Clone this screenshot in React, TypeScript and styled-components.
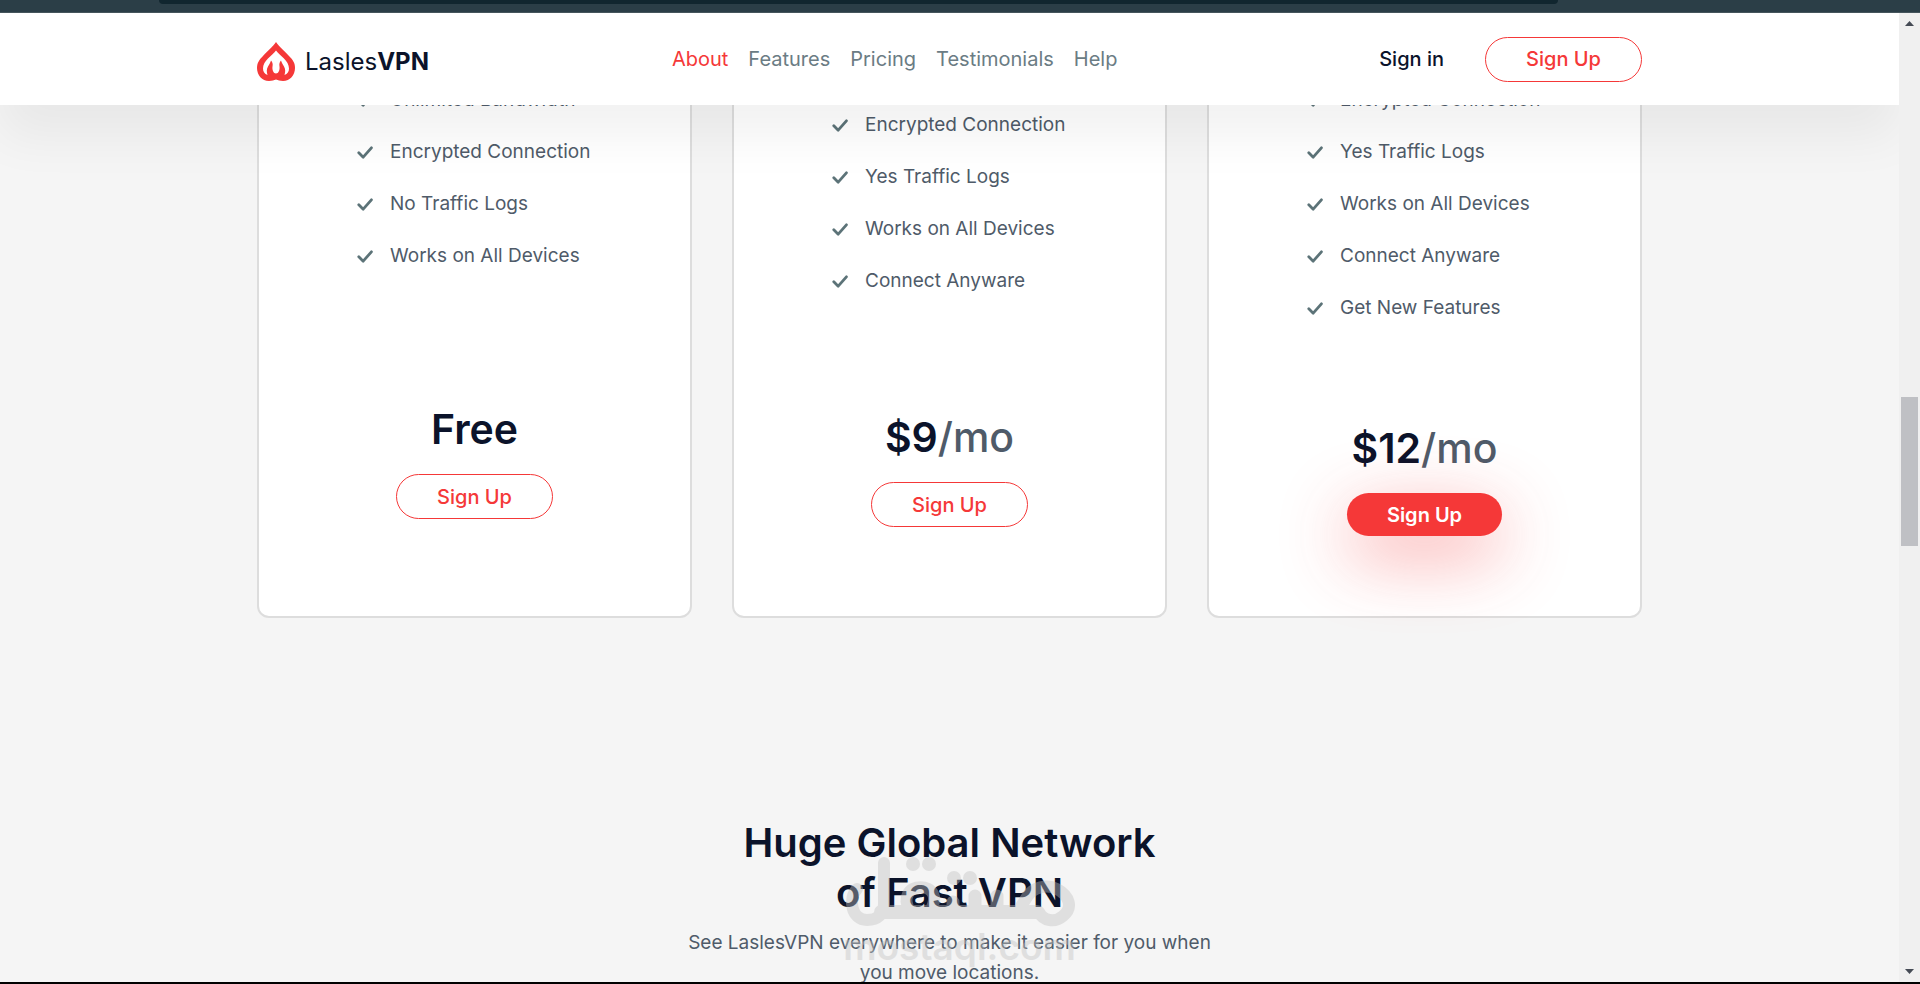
import React from "react";
import styled, { createGlobalStyle, css } from "styled-components";

const navy = "#0b132a";
const slate = "#4f5b69";
const red = "#f53838";

const GlobalStyle = createGlobalStyle`
  *, *::before, *::after { box-sizing: border-box; }
  body {
    margin: 0;
    background: #f5f5f5;
    color: ${slate};
    font-family: Inter, "Liberation Sans", sans-serif;
  }
`;

const Window = styled.div`
  display: flex;
  flex-direction: column;
  height: 100vh;
  overflow: hidden;
  border-bottom: 2px solid #000;
`;

const BrowserStrip = styled.div`
  flex: none;
  height: 13px;
  padding: 0 362px 0 159px;
  background: #2b3e47;
  border-bottom: 1px solid #45555c;
`;

const AddressBar = styled.div`
  height: 4px;
  border-radius: 0 0 8px 8px;
  background: #11262f;
`;

const Viewport = styled.div`
  flex: 1;
  min-height: 0;
  display: flex;
`;

const Page = styled.div`
  flex: 1;
  min-width: 0;
  overflow: hidden;
`;

const Container = styled.div`
  width: 100%;
  max-width: 1385px;
  margin: 0 auto;
`;

const Header = styled.header`
  position: relative;
  z-index: 2;
  background: #fff;
  box-shadow: 0 32px 50px rgba(14, 14, 14, 0.055);
`;

const HeaderRow = styled(Container)`
  display: flex;
  align-items: center;
  height: 92px;
`;

const Brand = styled.a`
  display: flex;
  align-items: center;
  gap: 10px;
  padding-top: 4px;
  color: ${navy};
  font-size: 24px;
  font-weight: 400;
  line-height: 30px;
  text-decoration: none;

  span { padding-top: 2px; }
  b { font-weight: 700; }
`;

const Nav = styled.nav`
  display: flex;
  gap: 20px;
  margin: 0 auto 0 243px;
`;

const NavLink = styled.a<{ $active?: boolean }>`
  color: ${(p) => (p.$active ? red : "#6b7c84")};
  font-size: 20px;
  line-height: 30px;
  text-decoration: none;
`;

const Account = styled.div`
  display: flex;
  align-items: center;
  gap: 41px;
`;

const SignIn = styled.a`
  color: ${navy};
  font-size: 20px;
  font-weight: 500;
  line-height: 30px;
  text-decoration: none;
`;

const PillButton = styled.button<{ $filled?: boolean }>`
  width: 157px;
  height: 45px;
  padding: 0;
  border: 1px solid ${red};
  border-radius: 24px;
  background: transparent;
  color: ${red};
  font: 500 20px/30px Inter, "Liberation Sans", sans-serif;
  cursor: pointer;

  ${(p) =>
    p.$filled &&
    css`
      width: 155px;
      height: 43px;
      border: 0;
      background: ${red};
      color: #fff;
      font-weight: 600;
      box-shadow: 0 20px 70px rgba(245, 56, 56, 0.45);
    `}
`;

const Plans = styled(Container)`
  display: grid;
  grid-template-columns: repeat(3, 1fr);
  gap: 40px;
  margin-top: -92px;
`;

const Card = styled.article<{ $top: number; $bottom: number }>`
  display: flex;
  flex-direction: column;
  align-items: center;
  padding: ${(p) => p.$top}px 0 ${(p) => p.$bottom}px;
  border: 2px solid #dddddd;
  border-radius: 12px;
  background: #fff;
`;

const FeatureList = styled.ul`
  align-self: stretch;
  margin: 0 0 89px;
  padding: 0 0 0 98px;
  list-style: none;
`;

const Feature = styled.li`
  display: flex;
  align-items: center;
  gap: 17px;
  height: 52px;
  font-size: 19px;
  line-height: 30px;
  white-space: nowrap;
`;

const Price = styled.h3`
  margin: auto 0 20px;
  color: ${navy};
  font-size: 41px;
  font-weight: 600;
  line-height: 50px;

  span { color: ${slate}; font-weight: 500; }
`;

const Network = styled.section`
  position: relative;
  margin-top: 200px;
  text-align: center;
`;

const NetworkTitle = styled.h2`
  margin: 0 0 10px;
  color: ${navy};
  font-size: 40px;
  font-weight: 600;
  line-height: 50px;
`;

const NetworkText = styled.p`
  max-width: 560px;
  margin: 0 auto;
  font-size: 19px;
  line-height: 30px;
`;

const Watermark = styled.div`
  position: absolute;
  top: 38px;
  left: 0;
  right: 0;
  display: flex;
  flex-direction: column;
  align-items: center;
  padding-left: 20px;
  color: #c2c2c2;
  font-size: 37px;
  font-weight: 600;
  line-height: 40px;
  opacity: 0.41;
  pointer-events: none;
`;

const ScrollRail = styled.div`
  flex: none;
  display: grid;
  grid-template-rows: 21px 363fr 149fr 415fr 21px;
  justify-items: center;
  align-items: center;
  width: 21px;
  background: #f0f0f0;
`;

const ScrollThumb = styled.div`
  grid-row: 3;
  align-self: stretch;
  width: 17px;
  background: #bfc0c4;
`;

const ScrollArrow = styled.svg<{ $row: number }>`
  grid-row: ${(p) => p.$row};
`;

const Logo = () => (
  <svg width="38" height="39" viewBox="0 0 38 39" aria-hidden="true">
    <path
      fill={red}
      d="M19 0C22 5 28 9 32 14C36 18 38 21 38 26C38 33 33 39 26 39C23 39 21 38.4 19 37.6C17 38.4 15 39 12 39C5 39 0 33 0 26C0 21 2 18 6 14C10 9 16 5 19 0Z"
    />
    <path
      fill="#fff"
      d="M19 8.500C23 14 32 18.500 32 26.500C32 29.500 30.500 32 27.500 33C28.500 29.500 28.500 27.500 27 24.500C25.500 22 24.500 20 24 18.500C22.500 20 22 22 22.500 24.500C23 28 21.500 31.500 19 31.500C16.500 31.500 15 28 15.500 24.500C16 22 15.500 20 14 18.500C13.500 20 12.500 22 11 24.500C9.500 27.500 9.500 29.500 10.500 33C7.500 32 6 29.500 6 26.500C6 18.500 15 14 19 8.500Z"
    />
  </svg>
);

const Check = () => (
  <svg width="16" height="14" viewBox="0 0 16 14" fill="none" aria-hidden="true">
    <path d="M1.800 7.800L6.200 12.200L14.400 2.800" stroke="#5c7378" strokeWidth="2.800" strokeLinecap="round" strokeLinejoin="round" />
  </svg>
);

const WatermarkMark = () => (
  <svg width="230" height="71" viewBox="0 0 230 71" fill="none" stroke="currentColor" strokeWidth="12" strokeLinecap="round" aria-hidden="true">
    <path d="M12 33C3 42 6 64 22 64C33 64 39 58 39 48V7" />
    <path d="M36 56H192" strokeWidth="14" />
    <path d="M64 54C62 48 60 44 63 38C67 29 84 29 88 38C91 44 88 48 86 54" />
    <path d="M108 54V46M130 54V40M152 54V40" strokeWidth="13" />
    <path d="M173 55L182 41C188 31 202 28 212 33C225 40 228 52 218 60C210 67 198 65 194 56" />
    <g fill="currentColor" stroke="none">
      <circle cx="68" cy="8" r="7" />
      <circle cx="84" cy="8" r="7" />
      <circle cx="109" cy="22" r="7" />
      <circle cx="125" cy="22" r="7" />
    </g>
  </svg>
);

const navItems = ["About", "Features", "Pricing", "Testimonials", "Help"];

const plans = [
  {
    price: "Free",
    top: 59,
    bottom: 97,
    features: ["Unlimited Bandwidth", "Encrypted Connection", "No Traffic Logs", "Works on All Devices"],
  },
  {
    price: "$9",
    period: "/mo",
    top: 84,
    bottom: 89,
    features: ["Encrypted Connection", "Yes Traffic Logs", "Works on All Devices", "Connect Anyware"],
  },
  {
    price: "$12",
    period: "/mo",
    top: 59,
    bottom: 80,
    filled: true,
    features: [
      "Encrypted Connection",
      "Yes Traffic Logs",
      "Works on All Devices",
      "Connect Anyware",
      "Get New Features",
    ],
  },
];

export default function App() {
  return (
    <Window>
      <GlobalStyle />
      <BrowserStrip>
        <AddressBar />
      </BrowserStrip>
      <Viewport>
        <Page>
          <Header>
            <HeaderRow>
              <Brand href="#">
                <Logo />
                <span>
                  Lasles<b>VPN</b>
                </span>
              </Brand>
              <Nav>
                {navItems.map((item, i) => (
                  <NavLink key={item} href="#" $active={i === 0}>
                    {item}
                  </NavLink>
                ))}
              </Nav>
              <Account>
                <SignIn href="#">Sign in</SignIn>
                <PillButton>Sign Up</PillButton>
              </Account>
            </HeaderRow>
          </Header>
          <Plans>
            {plans.map((plan) => (
              <Card key={plan.price} $top={plan.top} $bottom={plan.bottom}>
                <FeatureList>
                  {plan.features.map((feature) => (
                    <Feature key={feature}>
                      <Check />
                      {feature}
                    </Feature>
                  ))}
                </FeatureList>
                <Price>
                  {plan.price}
                  {plan.period && <span>{plan.period}</span>}
                </Price>
                <PillButton $filled={plan.filled}>Sign Up</PillButton>
              </Card>
            ))}
          </Plans>
          <Network>
            <NetworkTitle>
              Huge Global Network
              <br />
              of Fast VPN
            </NetworkTitle>
            <NetworkText>See LaslesVPN everywhere to make it easier for you when you move locations.</NetworkText>
            <Watermark>
              <WatermarkMark />
              <span>mostaql.com</span>
            </Watermark>
          </Network>
        </Page>
        <ScrollRail>
          <ScrollArrow $row={1} width="9" height="5" viewBox="0 0 9 5">
            <path d="M0 5L4.500 0L9 5Z" fill="#454b55" />
          </ScrollArrow>
          <ScrollThumb />
          <ScrollArrow $row={5} width="9" height="5" viewBox="0 0 9 5">
            <path d="M0 0H9L4.500 5Z" fill="#454b55" />
          </ScrollArrow>
        </ScrollRail>
      </Viewport>
    </Window>
  );
}
